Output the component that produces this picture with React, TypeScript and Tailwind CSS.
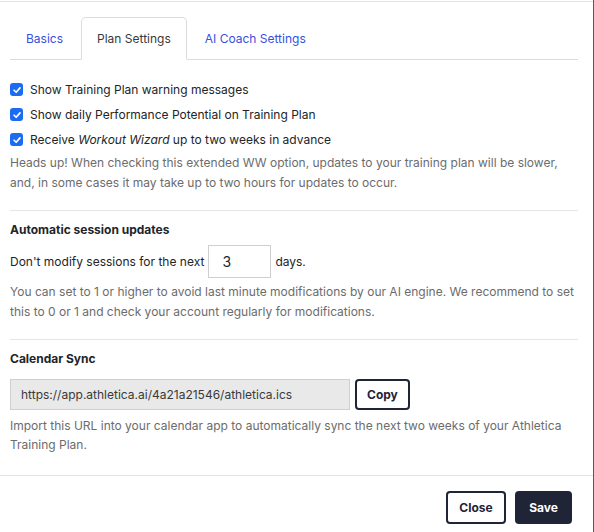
import React, { useState } from 'react'

const font = { fontFamily: 'Inter, "Noto Sans", sans-serif' }

function Check({ checked, onChange, children }: { checked: boolean; onChange: () => void; children: React.ReactNode }) {
  return (
    <label className="flex h-[25px] cursor-pointer items-center gap-[7px] text-[12px] text-[#212529]">
      <span
        onClick={onChange}
        className={`flex h-[13px] w-[13px] items-center justify-center rounded-[3px] ${checked ? 'bg-[#1b6cf2]' : 'border border-gray-400 bg-white'}`}
      >
        {checked && (
          <svg viewBox="0 0 12 12" className="h-[10px] w-[10px]" fill="none" stroke="white" strokeWidth="2" strokeLinecap="round" strokeLinejoin="round">
            <path d="M2.5 6.3 5 8.7 9.6 3.4" />
          </svg>
        )}
      </span>
      <span>{children}</span>
    </label>
  )
}

export default function App() {
  const [tab, setTab] = useState('plan')
  const [checks, setChecks] = useState([true, true, true])
  const [days, setDays] = useState('3')

  const toggle = (i: number) => setChecks(c => c.map((v, j) => (j === i ? !v : v)))

  const tabs = [
    { id: 'basics', label: 'Basics' },
    { id: 'plan', label: 'Plan Settings' },
    { id: 'coach', label: 'AI Coach Settings' },
  ]

  return (
    <div style={font} className="h-[532px] w-[594px] border-r border-[#5a5a5a] bg-white">
      <div className="h-[2px] border-b border-[#e3e3e3]" />

      {/* Body */}
      <div className="px-[10px] pr-[15px]">
        <div className="mt-[15px] flex gap-[2px] border-b border-[#dcdcdc]">
          {tabs.map(t => (
            <button
              key={t.id}
              onClick={() => setTab(t.id)}
              className={`-mb-px h-[43px] rounded-t-[5px] border px-[15px] text-[12px] ${
                tab === t.id
                  ? 'border-[#dcdcdc] border-b-white bg-white text-[#3a3a3a]'
                  : 'border-transparent text-[#3451e0]'
              }`}
            >
              {t.label}
            </button>
          ))}
        </div>

        <div className="mt-[17px]">
          <Check checked={checks[0]} onChange={() => toggle(0)}>Show Training Plan warning messages</Check>
          <Check checked={checks[1]} onChange={() => toggle(1)}>Show daily Performance Potential on Training Plan</Check>
          <Check checked={checks[2]} onChange={() => toggle(2)}>
            Receive <i>Workout Wizard</i> up to two weeks in advance
          </Check>
          <p className="mt-[1px] text-[12px] leading-[20px] text-[#6c6c6c]">
            Heads up! When checking this extended WW option, updates to your training plan will be slower, and, in some cases it may take up to two hours for updates to occur.
          </p>
        </div>

        <div className="mt-[17px] border-t border-[#e6e6e6] pt-[9px]">
          <h3 className="text-[12px] font-bold leading-[20px] text-[#212529]">Automatic session updates</h3>
          <div className="mt-[5px] flex items-center text-[12px] text-[#212529]">
            <span>Don't modify sessions for the next</span>
            <input
              value={days}
              onChange={e => setDays(e.target.value)}
              className="mx-[4px] h-[33px] w-[63px] border border-[#cfcfcf] px-[13px] text-[14px] text-[#212529] outline-none"
            />
            <span>days.</span>
          </div>
          <p className="mt-[4px] text-[12px] leading-[20px] text-[#6c6c6c]">
            You can set to 1 or higher to avoid last minute modifications by our AI engine. We recommend to set this to 0 or 1 and check your account regularly for modifications.
          </p>
        </div>

        <div className="mt-[17px] border-t border-[#e6e6e6] pt-[9px]">
          <h3 className="text-[12px] font-bold leading-[20px] text-[#212529]">Calendar Sync</h3>
          <div className="mt-[10px] flex items-center gap-[5px]">
            <input
              readOnly
              value="https://app.athletica.ai/4a21a21546/athletica.ics"
              className="h-[31px] w-[340px] border border-[#cfcfcf] bg-[#e9e9e9] px-[10px] text-[12px] text-[#3a3a3a] outline-none"
            />
            <button className="h-[31px] rounded-[4px] border-2 border-[#1f2437] px-[10px] text-[12px] font-bold text-[#1f2437]">
              Copy
            </button>
          </div>
          <p className="mt-[6px] text-[12px] leading-[19px] text-[#6c6c6c]">
            Import this URL into your calendar app to automatically sync the next two weeks of your Athletica Training Plan.
          </p>
        </div>
      </div>

      {/* Footer */}
      <div className="mt-[21px] flex justify-end gap-[9px] border-t border-[#e3e3e3] pr-[21px] pt-[15px]">
        <button className="h-[33px] w-[60px] rounded-[4px] border-2 border-[#1f2437] text-[12px] font-bold text-[#1f2437]">
          Close
        </button>
        <button className="h-[33px] w-[57px] rounded-[4px] bg-[#1f2437] text-[12px] font-bold text-white">
          Save
        </button>
      </div>
    </div>
  )
}
